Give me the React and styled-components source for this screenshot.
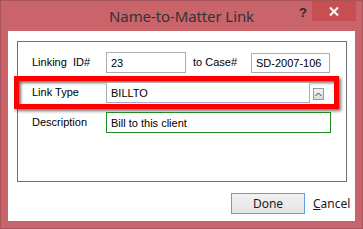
import React from "react";
import styled, { createGlobalStyle } from "styled-components";

const Global = createGlobalStyle`
  html, body { margin: 0; padding: 0; background: #c9646b; }
  * { box-sizing: border-box; }
`;

const Window = styled.div`
  width: 363px;
  height: 229px;
  background: #c9646b;
  border: 1px solid #a9545b;
  display: flex;
  flex-direction: column;
  position: relative;
`;

const TitleBar = styled.div`
  height: 30px;
  display: flex;
  align-items: center;
  justify-content: center;
  position: relative;
`;

const Title = styled.div`
  font-family: "Noto Sans", "Open Sans", sans-serif;
  font-size: 15px;
  color: #333333;
  letter-spacing: -0.1px;
  margin-top: -1px;
`;

const Controls = styled.div`
  position: absolute;
  right: 6px;
  top: 0;
  display: flex;
  align-items: flex-start;
`;

const HelpBtn = styled.div`
  width: 18px;
  height: 20px;
  margin-right: 0px;
  display: flex;
  align-items: center;
  justify-content: center;
  font-family: "Liberation Sans", Arial, sans-serif;
  font-weight: bold;
  font-size: 13px;
  color: #2b2b2b;
  padding-top: 2px;
`;

const CloseBtn = styled.div`
  width: 44px;
  height: 20px;
  background: #c74f52;
  display: flex;
  align-items: center;
  justify-content: center;
  margin-left: 0px;
`;

const Client = styled.div`
  flex: 1;
  margin: 0 7px 7px 7px;
  background: #ffffff;
  padding: 10px 0 0 9px;
  display: flex;
  flex-direction: column;
`;

const GroupBox = styled.div`
  width: 330px;
  height: 141px;
  border: 1px solid #707070;
  padding: 10px 0 0 14px;
  display: flex;
  flex-direction: column;
  gap: 9px;
`;

const Row = styled.div`
  display: flex;
  align-items: flex-start;
  height: 21px;
  position: relative;
`;

const Label = styled.div`
  width: ${(p) => p.$w || 74}px;
  margin-left: ${(p) => p.$ml || 0}px;
  height: 21px;
  line-height: 21px;
  font-family: "Liberation Sans", Arial, sans-serif;
  font-size: 11px;
  color: #000;
  white-space: pre;
  position: relative;
  z-index: 2;
`;

const Field = styled.div`
  width: ${(p) => p.$w}px;
  height: ${(p) => p.$h || 21}px;
  margin-top: ${(p) => p.$mt || 0}px;
  border: 1px solid ${(p) => p.$border || "#abadb3"};
  padding-left: 4px;
  display: flex;
  align-items: center;
  font-family: "Liberation Sans", Arial, sans-serif;
  font-size: 11px;
  color: #000;
  background: #fff;
  position: relative;
  z-index: 2;
`;

const DropBtn = styled.div`
  width: 11px;
  height: 12px;
  margin-left: 3px;
  margin-top: 6px;
  border: 1px solid #9a9a9a;
  background: linear-gradient(#f2f2f2, #dcdcdc);
  display: flex;
  align-items: center;
  justify-content: center;
  position: relative;
  z-index: 2;
`;

const Highlight = styled.div`
  position: absolute;
  left: -18px;
  top: -6px;
  width: 325px;
  height: 33px;
  border: 5px solid #ff0000;
  box-shadow: inset 2px 2px 3px rgba(0, 0, 0, 0.55), 2px 2px 3px rgba(0, 0, 0, 0.55);
  z-index: 1;
`;

const ButtonRow = styled.div`
  margin-top: 11px;
  display: flex;
  align-items: center;
  padding-left: 214px;
`;

const Button = styled.div`
  width: 74px;
  height: 21px;
  border: 1px solid #5aa0e6;
  background: linear-gradient(#f2f2f2, #e4e4e4);
  display: flex;
  align-items: center;
  justify-content: center;
  font-family: "Noto Sans", "Open Sans", sans-serif;
  font-size: 12px;
  color: #1a1a1a;
`;

const LinkBtn = styled.div`
  margin-left: 8px;
  font-family: "Noto Sans", "Open Sans", sans-serif;
  font-size: 12px;
  color: #1a1a1a;
  span { text-decoration: underline; }
`;

export default function App() {
  return (
    <>
      <Global />
      <Window>
        <TitleBar>
          <Title>Name-to-Matter Link</Title>
          <Controls>
            <HelpBtn>?</HelpBtn>
            <CloseBtn>
              <svg width="10" height="9" viewBox="0 0 10 9">
                <path d="M1 0.5 L9 8.5 M9 0.5 L1 8.5" stroke="#fff" strokeWidth="2" />
              </svg>
            </CloseBtn>
          </Controls>
        </TitleBar>
        <Client>
          <GroupBox>
            <Row>
              <Label>{"Linking  ID#"}</Label>
              <Field $w={80}>23</Field>
              <Label $w={58} $ml={7}>to Case#</Label>
              <Field $w={79} $h={20} $mt={1}>SD-2007-106</Field>
            </Row>
            <Row>
              <Highlight />
              <Label>Link Type</Label>
              <Field $w={204}>BILLTO</Field>
              <DropBtn>
                <svg width="7" height="5" viewBox="0 0 7 5">
                  <path d="M0.5 4 L3.5 1 L6.5 4" stroke="#404040" strokeWidth="1" fill="none" />
                </svg>
              </DropBtn>
            </Row>
            <Row>
              <Label>Description</Label>
              <Field $w={225} $border="#1e8a1e">Bill to this client</Field>
            </Row>
          </GroupBox>
          <ButtonRow>
            <Button>Done</Button>
            <LinkBtn><span>C</span>ancel</LinkBtn>
          </ButtonRow>
        </Client>
      </Window>
    </>
  );
}
